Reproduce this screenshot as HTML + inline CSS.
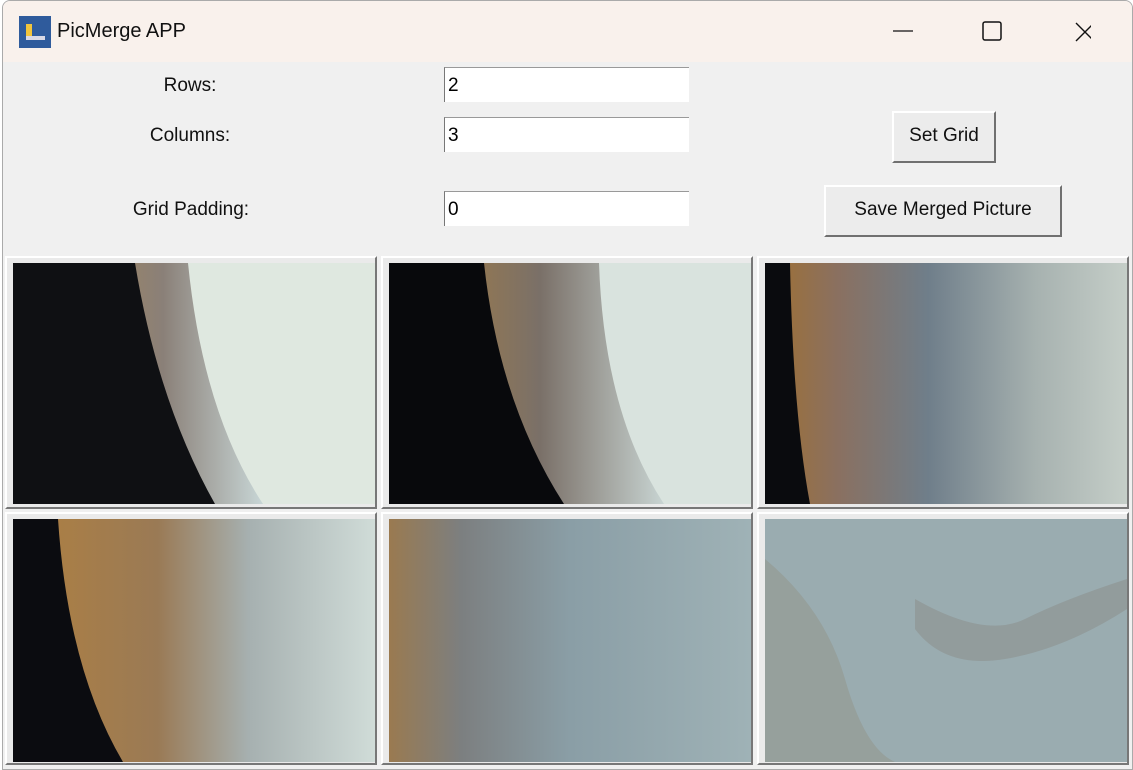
<!DOCTYPE html>
<html><head><style>
body{margin:0;width:1133px;height:770px;background:#fff;overflow:hidden;font-family:"Segoe UI","Liberation Sans",sans-serif;}
.win{position:absolute;left:2px;top:0;width:1129px;height:768px;background:#f0f0f0;border:1px solid #aaa;border-radius:8px 8px 0 0;overflow:hidden}
.title{position:absolute;left:0;top:0;width:100%;height:61px;background:#f9f1ec}
.title .t{position:absolute;left:54px;top:19px;font-size:20px;color:#111}
.lbl{position:absolute;font-size:19px;color:#111;transform:translateX(-50%)}
.inp{position:absolute;left:441px;width:245px;height:35px;background:#fff;border-left:1px solid #777;border-top:1px solid #999;box-sizing:border-box;font-size:19px;padding-left:3px;line-height:36px}
.btn{position:absolute;background:#ececec;border:2px solid;border-color:#fff #707070 #707070 #fff;box-sizing:border-box;font-size:19px;text-align:center;color:#111}
.cell{position:absolute;width:372px;height:253px;border:2px solid;border-color:#fff #777 #777 #fff;box-sizing:border-box;background:#eaeaea}
.cell svg{position:absolute;left:6px;top:5px}
</style></head><body>
<div class="win">
<div class="title">
<svg style="position:absolute;left:16px;top:15px" width="32" height="32"><rect width="32" height="32" fill="#2f5b9c"/><rect x="7" y="8" width="6" height="16" fill="#f2c53d"/><rect x="7" y="20" width="19" height="4" fill="#d9d9e6"/></svg>
<div class="t">PicMerge APP</div>
<svg style="position:absolute;left:888px;top:20px" width="200" height="24"><line x1="2" y1="10" x2="22" y2="10" stroke="#111" stroke-width="1.3"/><rect x="92" y="1" width="18" height="18" rx="2" fill="none" stroke="#111" stroke-width="1.5"/><path d="M185 2L203 20M203 2L185 20" stroke="#111" stroke-width="1.4"/></svg>
</div>
<div class="lbl" style="left:187px;top:74px">Rows:</div>
<div class="lbl" style="left:187px;top:124px">Columns:</div>
<div class="lbl" style="left:188px;top:198px">Grid Padding:</div>
<div class="inp" style="top:66px">2</div>
<div class="inp" style="top:116px">3</div>
<div class="inp" style="top:190px">0</div>
<div class="btn" style="left:889px;top:110px;width:104px;height:52px;line-height:46px">Set Grid</div>
<div class="btn" style="left:821px;top:184px;width:238px;height:52px;line-height:46px">Save Merged Picture</div>

<div class="cell" style="left:2px;top:255px"><svg width="362" height="241"><defs><linearGradient id="g1" x1="0" x2="1"><stop offset="0" stop-color="#b88a45"/><stop offset=".6" stop-color="#8a8078"/><stop offset="1" stop-color="#c8d6d6"/></linearGradient></defs><rect width="362" height="241" fill="#dfe8e0"/><path d="M0 0H175Q190 150 250 241H0Z" fill="url(#g1)"/><path d="M0 0H122Q145 140 202 241H0Z" fill="#0f1013"/></svg></div>
<div class="cell" style="left:378px;top:255px"><svg width="362" height="241"><defs><linearGradient id="g2" x1="0" x2="1"><stop offset="0" stop-color="#b08038"/><stop offset=".55" stop-color="#7a7068"/><stop offset="1" stop-color="#c8d4d2"/></linearGradient></defs><rect width="362" height="241" fill="#d9e3de"/><path d="M0 0H210Q215 150 275 241H0Z" fill="url(#g2)"/><path d="M0 0H95Q110 140 175 241H0Z" fill="#08090c"/></svg></div>
<div class="cell" style="left:754px;top:255px"><svg width="362" height="241"><defs><linearGradient id="g3" x1="0" x2="1"><stop offset="0" stop-color="#a07030"/><stop offset=".2" stop-color="#8a7060"/><stop offset=".45" stop-color="#6f7e8a"/><stop offset=".75" stop-color="#a7b2b0"/><stop offset="1" stop-color="#c5cec8"/></linearGradient></defs><rect width="362" height="241" fill="url(#g3)"/><path d="M0 0H25Q28 150 45 241H0Z" fill="#0a0b0e"/></svg></div>
<div class="cell" style="left:2px;top:511px"><svg width="362" height="243"><defs><linearGradient id="g4" x1="0" x2="1"><stop offset="0" stop-color="#b08040"/><stop offset=".4" stop-color="#9a7a55"/><stop offset=".65" stop-color="#a6b0b0"/><stop offset="1" stop-color="#d0dcd8"/></linearGradient></defs><rect width="362" height="243" fill="url(#g4)"/><path d="M0 0H45Q55 150 110 243H0Z" fill="#0b0c10"/></svg></div>
<div class="cell" style="left:378px;top:511px"><svg width="362" height="243"><defs><linearGradient id="g5" x1="0" x2="1"><stop offset="0" stop-color="#9a7a50"/><stop offset=".2" stop-color="#7c7f80"/><stop offset=".5" stop-color="#8a9ea6"/><stop offset="1" stop-color="#9fb2b6"/></linearGradient></defs><rect width="362" height="243" fill="url(#g5)"/></svg></div>
<div class="cell" style="left:754px;top:511px"><svg width="362" height="243"><rect width="362" height="243" fill="#9aacb0"/><path d="M0 40Q60 90 80 160T130 243H0Z" fill="#8e8a78" opacity=".35"/><path d="M150 80Q220 120 260 100T362 60V90Q300 130 240 140T150 110Z" fill="#7a6a60" opacity=".25"/></svg></div>
</div>
</body></html>
